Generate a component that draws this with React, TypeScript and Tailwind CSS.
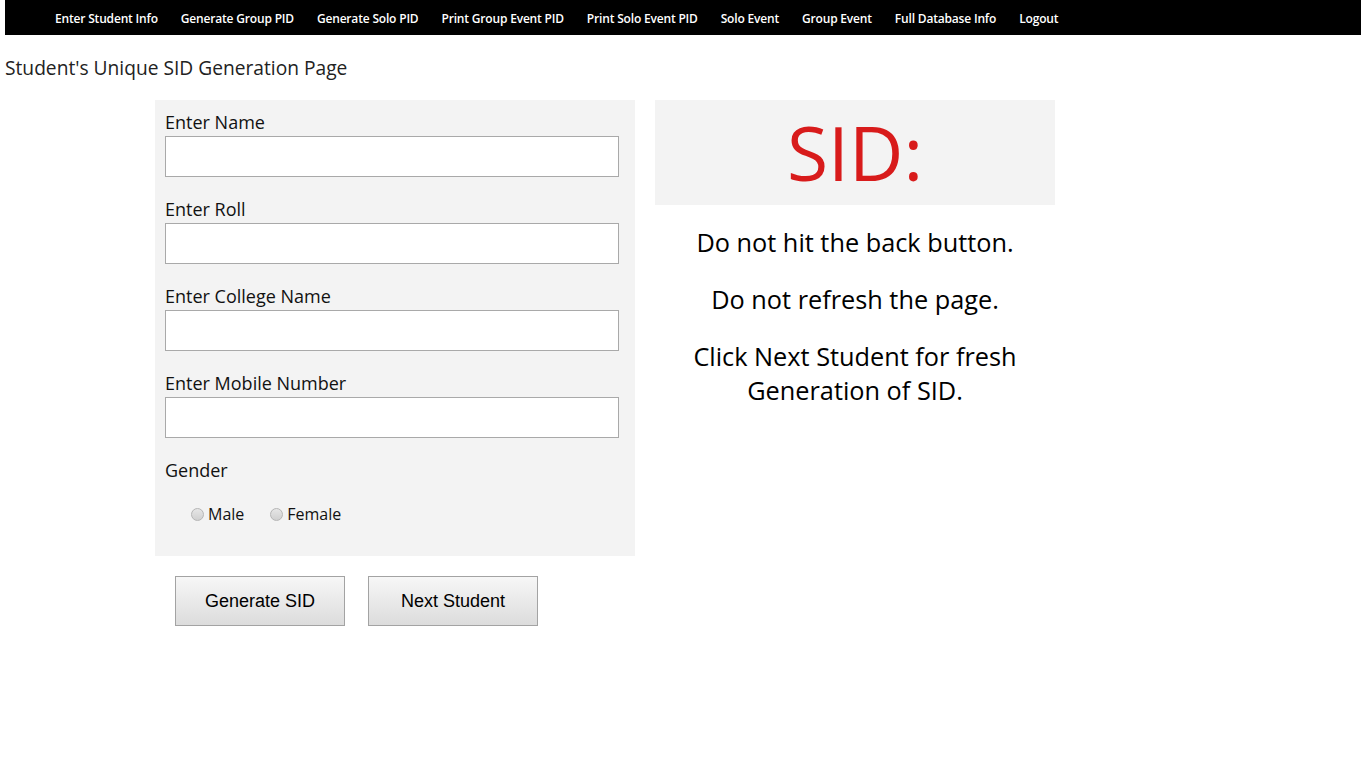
import React from "react";

const navItems = [
  "Enter Student Info",
  "Generate Group PID",
  "Generate Solo PID",
  "Print Group Event PID",
  "Print Solo Event PID",
  "Solo Event",
  "Group Event",
  "Full Database Info",
  "Logout",
];

function Field({ label }: { label: string }) {
  return (
    <div className="flex flex-col">
      <label className="text-[18px] leading-[24px] text-[#111]">{label}</label>
      <input
        type="text"
        className="mt-[2px] h-[41px] w-[454px] border border-[#a9a9a9] bg-white outline-none"
      />
    </div>
  );
}

function Radio({ label }: { label: string }) {
  return (
    <label className="flex items-center">
      <span className="box-border h-[13px] w-[13px] rounded-full border border-[#b5b5b5] bg-gradient-to-b from-[#e6e6e6] to-[#d0d0d0]" />
      <span className="ml-[4px] text-[16px] leading-[20px] text-[#111]">{label}</span>
    </label>
  );
}

export default function App() {
  return (
    <div className="min-h-[768px] bg-white" style={{ fontFamily: '"Open Sans", sans-serif' }}>
      <nav className="mx-[5px] flex h-[35px] items-center bg-black pl-[50px] pt-[2px]">
        <ul className="flex gap-[23px]">
          {navItems.map((n) => (
            <li key={n} className="text-[12px] font-semibold tracking-[-0.18px] text-white">
              {n}
            </li>
          ))}
        </ul>
      </nav>
      <h1 className="ml-[5px] mt-[21px] text-[19.2px] leading-[24px] text-[#222]">
        Student's Unique SID Generation Page
      </h1>
      <div className="ml-[155px] mt-[20px] flex gap-[20px]">
        <div className="flex flex-col">
          <div className="w-[480px] bg-[#f3f3f3] px-[10px] pb-[32px] pt-[10px]">
            <div className="flex flex-col gap-[20px]">
              <Field label="Enter Name" />
              <Field label="Enter Roll" />
              <Field label="Enter College Name" />
              <Field label="Enter Mobile Number" />
              <div className="flex flex-col">
                <div className="text-[18px] leading-[24px] text-[#111]">Gender</div>
                <div className="ml-[26px] mt-[22px] flex gap-[26px]">
                  <Radio label="Male" />
                  <Radio label="Female" />
                </div>
              </div>
            </div>
          </div>
          <div className="ml-[20px] mt-[20px] flex gap-[23px]">
            <button
              className="h-[50px] w-[170px] border border-[#a3a3a3] bg-gradient-to-b from-[#f7f7f7] to-[#dcdcdc] text-[18px] text-black"
              style={{ fontFamily: '"Liberation Sans", Arial, sans-serif' }}
            >
              Generate SID
            </button>
            <button
              className="h-[50px] w-[170px] border border-[#a3a3a3] bg-gradient-to-b from-[#f7f7f7] to-[#dcdcdc] text-[18px] text-black"
              style={{ fontFamily: '"Liberation Sans", Arial, sans-serif' }}
            >
              Next Student
            </button>
          </div>
        </div>
        <div className="flex w-[400px] flex-col">
          <div className="flex h-[105px] items-center justify-center bg-[#f3f3f3]">
            <span className="text-[75px] leading-none text-[#d81b1b]">SID:</span>
          </div>
          <div className="mt-[20px] flex flex-col gap-[23px] text-center text-[25.3px] font-medium leading-[34px] text-black">
            <p>Do not hit the back button.</p>
            <p>Do not refresh the page.</p>
            <p className="px-[20px]">Click Next Student for fresh Generation of SID.</p>
          </div>
        </div>
      </div>
    </div>
  );
}
